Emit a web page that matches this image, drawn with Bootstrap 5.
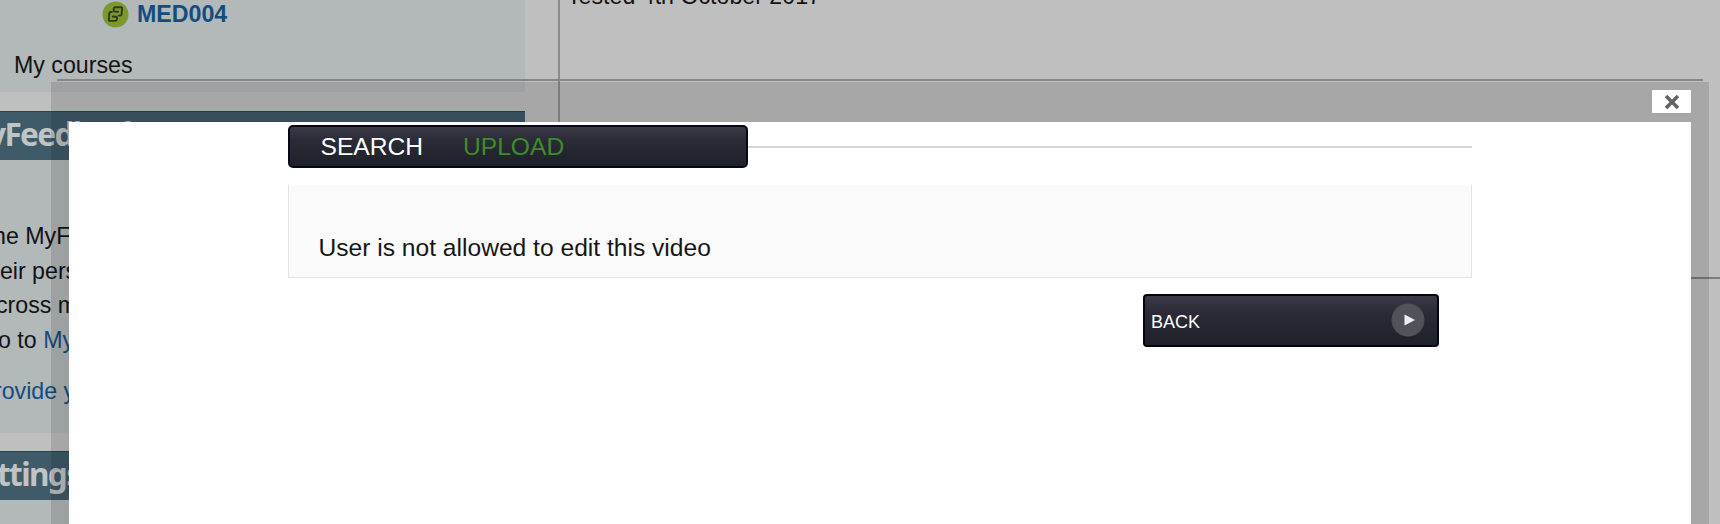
<!DOCTYPE html>
<html lang="en">
<head>
<meta charset="utf-8">
<title>Upload video</title>
<link href="https://cdn.jsdelivr.net/npm/bootstrap@5.3.0/dist/css/bootstrap.min.css" rel="stylesheet">
<script src="https://cdn.jsdelivr.net/npm/bootstrap@5.3.0/dist/js/bootstrap.bundle.min.js"></script>
<style>
body{background:#bfbfbf;font-family:"Liberation Sans",Arial,sans-serif;font-size:23.2px;color:#121314;height:524px;overflow:hidden}
.page{height:524px}
.side{width:525px}
.blk{background:#b3b8b9}
.courses{height:92px}
.blk-head{height:49px;background:#3f5b69;border-top:1px solid #244757;color:#c0c4c5;font:700 31.5px/44px "Noto Sans","Open Sans",sans-serif;letter-spacing:-1.6px;white-space:nowrap}
.feedback{height:273px;line-height:34.6px;white-space:nowrap}
.lnk{color:#124d80}
.course-link{padding-left:102px;height:29px}
.course-link svg{margin-top:1px}
.main-col{margin-left:33px;border-left:2px solid #8c8c8c;height:524px}
.intro{line-height:28px;margin:-18px 0 0 7px}
.rule-right{margin-top:267px;height:2px;background:#7d7d7d}
.overlay{top:0;left:0;width:1720px;height:524px}
.top-rule{height:2px;margin:79px 17px 0 57px;background:#868686}
.halo{margin:1px 11px 0 51px;height:442px;background:rgba(0,0,0,.12);padding:0 18px 0 17.5px}
.closer{width:39px;height:23px;margin:8px 0 9px 0;background:#fff;border:0;border-radius:1px}
.dialog-body{background:#fff;height:402px;padding:3px 219px 0 219px}
.bar{background:linear-gradient(#3a3b47,#2a2b36 35%,#1e202a);border:2px solid #07071a;border-radius:5px;color:#fff}
.tabs{width:460px;height:43px;font-size:24.6px;padding-left:31px}
.tabs span{line-height:39px;white-space:nowrap}
.tabs .on{color:#3f8c2a;margin-left:40px}
.line{height:1.5px;background:#d6d6d6;margin-top:1px}
.msg{height:93px;margin-top:16.5px;background:#fafafa;border:1.500px solid #e3e3e3;border-top:0;font-size:24.6px;padding:47px 0 0 30px;line-height:32px;white-space:nowrap;color:#161616}
.back{width:296px;height:53px;margin:16px 33px 0 0;font-size:18px;padding:0 12px 0 6px;border-color:#050510;border-radius:4px}
</style>
</head>
<body>
<div class="page d-flex">
  <aside class="side flex-shrink-0">
    <div class="blk courses">
      <div class="course-link d-flex">
        <svg width="27" height="27" viewBox="0 0 27 27"><circle cx="13.500" cy="13.500" r="13" fill="#7c9930"/><g fill="none" stroke="#30391c" stroke-width="1.900" stroke-linejoin="round" stroke-linecap="round"><path d="M16 10.800L12.600 10.600Q11.400 10.500 11.600 9.200L11.800 7.400Q12 6.200 13.200 6.200H18.900Q20.200 6.200 20.100 7.500L19.600 13.200Q19.500 14.600 18.200 14.600H16.800"/><path d="M10.700 15.500L14 15.700Q15.200 15.800 15 17.100L14.800 18.600Q14.600 19.900 13.400 19.900H8Q6.700 19.900 6.800 18.600L7.300 12.400Q7.400 11 8.700 11H9.800"/></g></svg>
        <b class="lnk" style="margin:-1px 0 0 8px;line-height:30px">MED004</b>
      </div>
      <div class="lh-sm" style="padding:22px 0 0 14px">My courses</div>
    </div>
    <div class="blk-head" style="margin-top:19px"><div style="margin-left:-12px">yFeedback</div></div>
    <div class="blk feedback">
      <div style="padding-top:59px">
        <div style="margin-left:-7px">he MyFeedback</div>
        <div style="margin-left:-13px">heir personal</div>
        <div style="margin-left:-4px">cross modules</div>
        <div style="margin-left:-2px">o to <span class="lnk">MyFeedback</span></div>
      </div>
      <div class="lnk" style="margin:17px 0 0 -6px">rovide your</div>
    </div>
    <div class="blk-head" style="margin-top:18px"><div style="margin-left:-3px">ttings</div></div>
    <div class="blk" style="height:24px"></div>
  </aside>
  <main class="main-col flex-grow-1">
    <div class="intro">Tested 4th October 2017</div>
    <div class="rule-right"></div>
  </main>
</div>
<div class="overlay position-absolute d-flex flex-column">
  <div class="top-rule flex-shrink-0"></div>
  <div class="halo flex-shrink-0">
    <div class="d-flex justify-content-end">
      <button class="closer p-0 d-flex align-items-center justify-content-center" aria-label="Close"><svg width="16" height="16" viewBox="0 0 16 16"><path d="M2 2l12 12M14 2l-12 12" stroke="#646464" stroke-width="3.600"/></svg></button>
    </div>
    <div class="dialog-body">
      <div class="d-flex align-items-center">
        <div class="bar tabs d-flex"><span>SEARCH</span><span class="on">UPLOAD</span></div>
        <div class="line flex-grow-1"></div>
      </div>
      <div class="msg">User is not allowed to edit this video</div>
      <div class="d-flex justify-content-end">
        <div class="bar back d-flex align-items-center justify-content-between"><span class="pt-1">BACK</span>
          <svg width="34" height="34" viewBox="0 0 34 34"><circle cx="17" cy="17" r="16.500" fill="#51525b"/><path d="M13.500 11.500l10.500 5.500-10.500 5.500z" fill="#f0f0f0"/></svg>
        </div>
      </div>
    </div>
  </div>
</div>
</body>
</html>
